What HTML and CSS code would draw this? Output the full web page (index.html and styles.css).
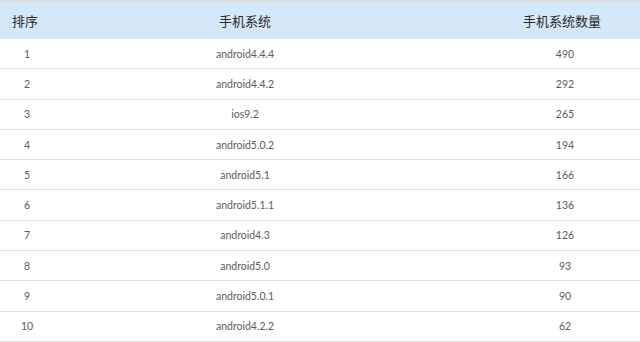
FILE: index.html
```html
<!DOCTYPE html>
<html lang="zh-CN">
<head>
<meta charset="utf-8">
<link rel="stylesheet" href="styles.css">
</head>
<body>
<div class="table">
  <div class="row head">
    <div class="c1">排序</div>
    <div class="c2">手机系统</div>
    <div class="c3">手机系统数量</div>
  </div>
  <div class="row"><div class="c1">1</div><div class="c2">android4.4.4</div><div class="c3">490</div></div>
  <div class="row"><div class="c1">2</div><div class="c2">android4.4.2</div><div class="c3">292</div></div>
  <div class="row"><div class="c1">3</div><div class="c2">ios9.2</div><div class="c3">265</div></div>
  <div class="row"><div class="c1">4</div><div class="c2">android5.0.2</div><div class="c3">194</div></div>
  <div class="row"><div class="c1">5</div><div class="c2">android5.1</div><div class="c3">166</div></div>
  <div class="row"><div class="c1">6</div><div class="c2">android5.1.1</div><div class="c3">136</div></div>
  <div class="row"><div class="c1">7</div><div class="c2">android4.3</div><div class="c3">126</div></div>
  <div class="row"><div class="c1">8</div><div class="c2">android5.0</div><div class="c3">93</div></div>
  <div class="row"><div class="c1">9</div><div class="c2">android5.0.1</div><div class="c3">90</div></div>
  <div class="row"><div class="c1">10</div><div class="c2">android4.2.2</div><div class="c3">62</div></div>
</div>
</body>
</html>
```
FILE: styles.css
```css
* { box-sizing: border-box; }
html, body { margin: 0; padding: 0; background: #fff; }
body { width: 640px; height: 342px; overflow: hidden; }
.table {
  border-top: 2px solid #dcdcdc;
  font-family: "Lato", "Noto Sans CJK SC", sans-serif;
}
.row {
  display: grid;
  grid-template-columns: 54px 382px 1fr;
  align-items: center;
  height: 30.3px;
  border-bottom: 1px solid #e2e2e2;
  font-size: 10.5px;
  color: #5c5c5c;
}
.row > div { text-align: center; }
.row .c3 { padding-left: 54px; }
.head {
  height: 37px;
  background: #d5e8f7;
  border-bottom: none;
  font-family: "Noto Sans CJK SC", sans-serif;
  font-size: 13px;
  font-weight: 400;
  color: #2a2a2a;
}
.head .c1 { text-align: left; padding-left: 12px; }
.head .c3 { padding-left: 48px; }
```
